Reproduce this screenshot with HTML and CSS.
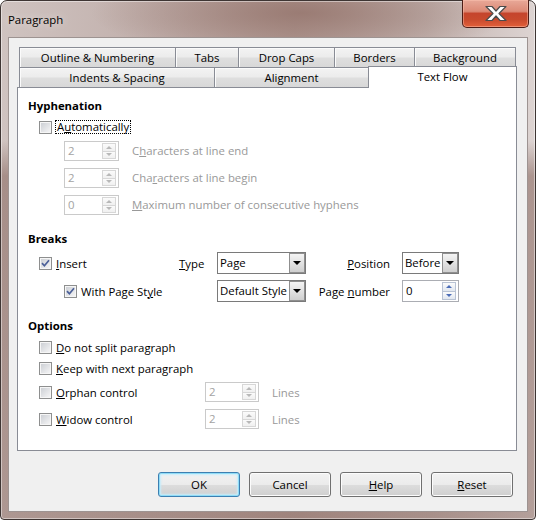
FILE: index.html
```html
<!DOCTYPE html>
<html>
<head>
<meta charset="utf-8">
<title>Paragraph</title>
<link rel="stylesheet" href="styles.css">
</head>
<body>
<div class="window">
  <div class="titlebar">
    <span class="title">Paragraph</span>
    <div class="close">
      <svg width="24" height="17" viewBox="0 0 24 17"><path d="M2,1.5 H8 L12,6 L16,1.5 H22 L15,8.5 L22,15.5 H16 L12,11 L8,15.5 H2 L9,8.5 Z" fill="#fff" stroke="#4b4b4b" stroke-width="1.2" stroke-linejoin="round"/></svg>
    </div>
  </div>
  <div class="client">
    <div class="tabs">
      <div class="tabrow row1">
        <div class="tab">Outline &amp; Numbering</div>
        <div class="tab">Tabs</div>
        <div class="tab">Drop Caps</div>
        <div class="tab">Borders</div>
        <div class="tab">Background</div>
      </div>
      <div class="tabrow row2">
        <div class="tab">Indents &amp; Spacing</div>
        <div class="tab">Alignment</div>
        <div class="tab active">Text Flow</div>
      </div>
    </div>
    <div class="panel">
      <div class="heading">Hyphenation</div>
      <div class="check-row auto-row"><span class="cb"></span><span class="focus">A<u>u</u>tomatically</span></div>
      <div class="spin-row spin-first">
        <div class="spin dis"><span class="val">2</span><span class="arrows"><i class="up"></i><i class="dn"></i></span></div>
        <span class="dim">C<u>h</u>aracters at line end</span>
      </div>
      <div class="spin-row spin-next">
        <div class="spin dis"><span class="val">2</span><span class="arrows"><i class="up"></i><i class="dn"></i></span></div>
        <span class="dim">Cha<u>r</u>acters at line begin</span>
      </div>
      <div class="spin-row spin-next">
        <div class="spin dis"><span class="val">0</span><span class="arrows"><i class="up"></i><i class="dn"></i></span></div>
        <span class="dim"><u>M</u>aximum number of consecutive hyphens</span>
      </div>

      <div class="heading section-gap">Breaks</div>
      <div class="breaks">
        <div class="cell"><span class="cb"><svg viewBox="0 0 9 9" width="9" height="9"><path d="M1,4.2 L3.4,6.8 L8,1.2" fill="none" stroke="#4a5f98" stroke-width="1.7"/></svg></span><span><u>I</u>nsert</span></div>
        <div class="cell"><span><u>T</u>ype</span></div>
        <div class="select"><span class="val">Page</span><span class="drop"></span></div>
        <div class="cell right"><span><u>P</u>osition</span></div>
        <div class="select"><span class="val">Before</span><span class="drop"></span></div>

        <div class="cell indent"><span class="cb"><svg viewBox="0 0 9 9" width="9" height="9"><path d="M1,4.2 L3.4,6.8 L8,1.2" fill="none" stroke="#4a5f98" stroke-width="1.7"/></svg></span><span>With Page St<u>y</u>le</span></div>
        <div class="cell"></div>
        <div class="select"><span class="val">Default Style</span><span class="drop"></span></div>
        <div class="cell right"><span>Page <u>n</u>umber</span></div>
        <div class="spin wide"><span class="val">0</span><span class="arrows"><i class="up"></i><i class="dn"></i></span></div>
      </div>

      <div class="heading section-gap">Options</div>
      <div class="check-row auto-row"><span class="cb"></span><span><u>D</u>o not split paragraph</span></div>
      <div class="check-row auto-row"><span class="cb"></span><span><u>K</u>eep with next paragraph</span></div>
      <div class="ctl-row spin-first">
        <div class="cell"><span class="cb"></span><span><u>O</u>rphan control</span></div>
        <div class="spin dis narrow"><span class="val">2</span><span class="arrows"><i class="up"></i><i class="dn"></i></span></div>
        <span class="dim lines">Lines</span>
      </div>
      <div class="ctl-row spin-next">
        <div class="cell"><span class="cb"></span><span><u>W</u>idow control</span></div>
        <div class="spin dis narrow"><span class="val">2</span><span class="arrows"><i class="up"></i><i class="dn"></i></span></div>
        <span class="dim lines">Lines</span>
      </div>
    </div>
    <div class="buttons">
      <div class="btn default">OK</div>
      <div class="btn">Cancel</div>
      <div class="btn"><span><u>H</u>elp</span></div>
      <div class="btn"><span><u>R</u>eset</span></div>
    </div>
  </div>
</div>
</body>
</html>
```
FILE: styles.css
```css
* { box-sizing: border-box; }
html, body { margin: 0; padding: 0; }
body {
  width: 536px;
  height: 520px;
  font-family: "Open Sans", "Noto Sans", sans-serif;
  font-size: 11.4px;
  color: #000;
  background: #fff;
}
u { text-decoration: underline; text-underline-offset: 1px; text-decoration-thickness: 1px; }

.window {
  width: 536px;
  height: 520px;
  border: 1px solid #3e3533;
  border-radius: 7px 7px 4px 4px;
  padding: 0 7px 7px;
  display: flex;
  flex-direction: column;
  box-shadow: inset 0 0 0 1px rgba(255,255,255,.45);
  background:
    linear-gradient(to bottom, rgba(140,108,100,0) 0px, rgba(140,108,100,0) 140px, rgba(140,108,100,.6) 175px, rgba(140,108,100,.5) 100%),
    radial-gradient(ellipse 210px 45px at 300px 12px, rgba(150,118,110,.85), rgba(150,118,110,0)),
    linear-gradient(to right, #cfc3c0 0%, #c0aeaa 30%, #b39c96 55%, #c3b3af 80%, #ddd4d2 100%);
}

.titlebar {
  height: 36px;
  flex-shrink: 0;
  display: flex;
  align-items: flex-start;
}
.title {
  padding-top: 11px;
  line-height: 16px;
  text-shadow: 0 0 8px rgba(255,255,255,.7);
}
.close {
  margin: -1px -1px 0 auto;
  width: 67px;
  height: 28px;
  border: 1px solid #4d1d16;
  border-top: none;
  border-radius: 0 0 5px 5px;
  background: linear-gradient(#e8a898 0%, #dc8a76 42%, #c5452c 50%, #c84a2d 72%, #e2603a 100%);
  box-shadow: inset 0 0 0 1px rgba(255,200,180,.45);
  display: flex;
  align-items: center;
  justify-content: center;
}

.client {
  flex: 1;
  background: #f0f0f0;
  border: 1px solid #9d9391;
  padding: 9px 10px 14px 8px;
  display: flex;
  flex-direction: column;
}

.tabs { margin-left: 2px; }
.tabrow { display: grid; height: 20px; align-items: start; }
.row1 { grid-template-columns: 156px 63px 96px 80px 102px; }
.row2 { grid-template-columns: 195px 154px 149px; }
.tab {
  height: 20px;
  border: 1px solid #898c95;
  border-bottom: none;
  border-right: none;
  background: linear-gradient(#f3f3f3, #ececec 45%, #dedede 55%, #d8d8d8);
  box-shadow: inset 1px 1px 0 #fbfbfb;
  text-align: center;
  line-height: 19px;
  white-space: nowrap;
}
.tab:last-child { border-right: 1px solid #898c95; }
.tab.active {
  background: #fff;
  box-shadow: none;
  height: 22px;
  margin-top: -1px;
  position: relative;
  z-index: 1;
}

.panel {
  width: 500px;
  height: 364px;
  border: 1px solid #898c95;
  background: #fff;
  padding: 10px 10px 0;
}

.heading { font-weight: 700; height: 16px; line-height: 16px; }
.section-gap { margin-top: 16px; }

.check-row {
  display: flex;
  align-items: center;
  height: 16px;
  margin-left: 11px;
  gap: 4px;
  white-space: nowrap;
}
.auto-row { margin-top: 5px; }
.focus {
  border: 1px dotted #000;
  padding: 0 1px;
  line-height: 12px;
  margin-left: -1px;
}

.cb {
  width: 13px;
  height: 13px;
  flex-shrink: 0;
  border: 1px solid #8e8f8f;
  padding: 1px;
  background: linear-gradient(135deg, #cdd0d5, #f4f4f5) content-box, #f6f6f6;
}
.cb svg { display: block; overflow: visible; }

.spin-row {
  display: flex;
  align-items: center;
  height: 20px;
  margin-left: 36px;
  gap: 13px;
  white-space: nowrap;
}
.spin-row .dim { margin-top: -2px; }
.spin-first { margin-top: 6px; }
.spin-next { margin-top: 7px; }

.dim { color: #999; }

.spin {
  display: flex;
  width: 55px;
  height: 20px;
  border: 1px solid #abadb3;
  background: #fff;
}
.spin.narrow { width: 54px; }
.spin.wide { width: 57px; height: 22px; }
.spin .val { flex: 1; padding-left: 3px; line-height: 17px; }
.spin.wide .val { line-height: 19px; }
.spin .arrows {
  width: 14px;
  margin: 1px 2px 1px 0;
  display: flex;
  flex-direction: column;
}
.arrows i {
  flex: 1;
  border: 1px solid #b9c3d4;
  background: linear-gradient(#fbfbfb, #e1e7f0);
  display: flex;
  align-items: center;
  justify-content: center;
}
.arrows i + i { margin-top: -1px; }
.arrows i::before {
  content: "";
  border-left: 3px solid transparent;
  border-right: 3px solid transparent;
}
.arrows i.up::before { border-bottom: 3px solid #4b6cb7; }
.arrows i.dn::before { border-top: 3px solid #4b6cb7; }
.spin.dis { border-color: #cacaca; color: #a3a3a3; }
.spin.dis .arrows i { border-color: #d7d7d7; background: linear-gradient(#fbfbfb, #f0f0f0); }
.spin.dis .arrows i.up::before { border-bottom-color: #b8b8b8; }
.spin.dis .arrows i.dn::before { border-top-color: #b8b8b8; }

.breaks {
  display: grid;
  grid-template-columns: 140px 38px 89px 96px 57px;
  grid-auto-rows: 22px;
  row-gap: 6px;
  margin-left: 11px;
  margin-top: 5px;
}
.cell {
  display: flex;
  align-items: center;
  gap: 4px;
  white-space: nowrap;
}
.cell.right { justify-content: flex-end; padding-right: 12px; }
.cell.indent { padding-left: 25px; }

.select {
  display: flex;
  height: 22px;
  border: 1px solid #7a7a7a;
  background: #fff;
}
.select .val {
  flex: 1;
  padding-left: 2px;
  line-height: 19px;
  white-space: nowrap;
  overflow: hidden;
}
.select .drop {
  width: 16px;
  border: 1px solid #8f8f8f;
  background: linear-gradient(#f4f4f4, #e2e2e2 50%, #cfcfcf);
  display: flex;
  align-items: center;
  justify-content: center;
}
.select .drop::before {
  content: "";
  border-left: 4px solid transparent;
  border-right: 4px solid transparent;
  border-top: 4px solid #000;
}

.ctl-row {
  display: grid;
  grid-template-columns: 166px 54px auto;
  height: 20px;
  margin-left: 11px;
  align-items: center;
}
.lines { margin-left: 13px; }

.buttons {
  display: flex;
  justify-content: flex-end;
  gap: 9px;
  margin-top: 21px;
  margin-right: 4px;
}
.btn {
  width: 82px;
  height: 25px;
  border: 1px solid #707070;
  border-radius: 3px;
  background: linear-gradient(#f2f2f2, #ebebeb 50%, #dddddd 51%, #cfcfcf);
  box-shadow: inset 0 0 0 1px #fcfcfc;
  display: flex;
  align-items: center;
  justify-content: center;
  padding-bottom: 1px;
}
.btn.default {
  border-color: #3c7fb1;
  box-shadow: inset 0 0 0 1px #8fdcf7, inset 0 0 2px 2px #c6edfb;
}
```
